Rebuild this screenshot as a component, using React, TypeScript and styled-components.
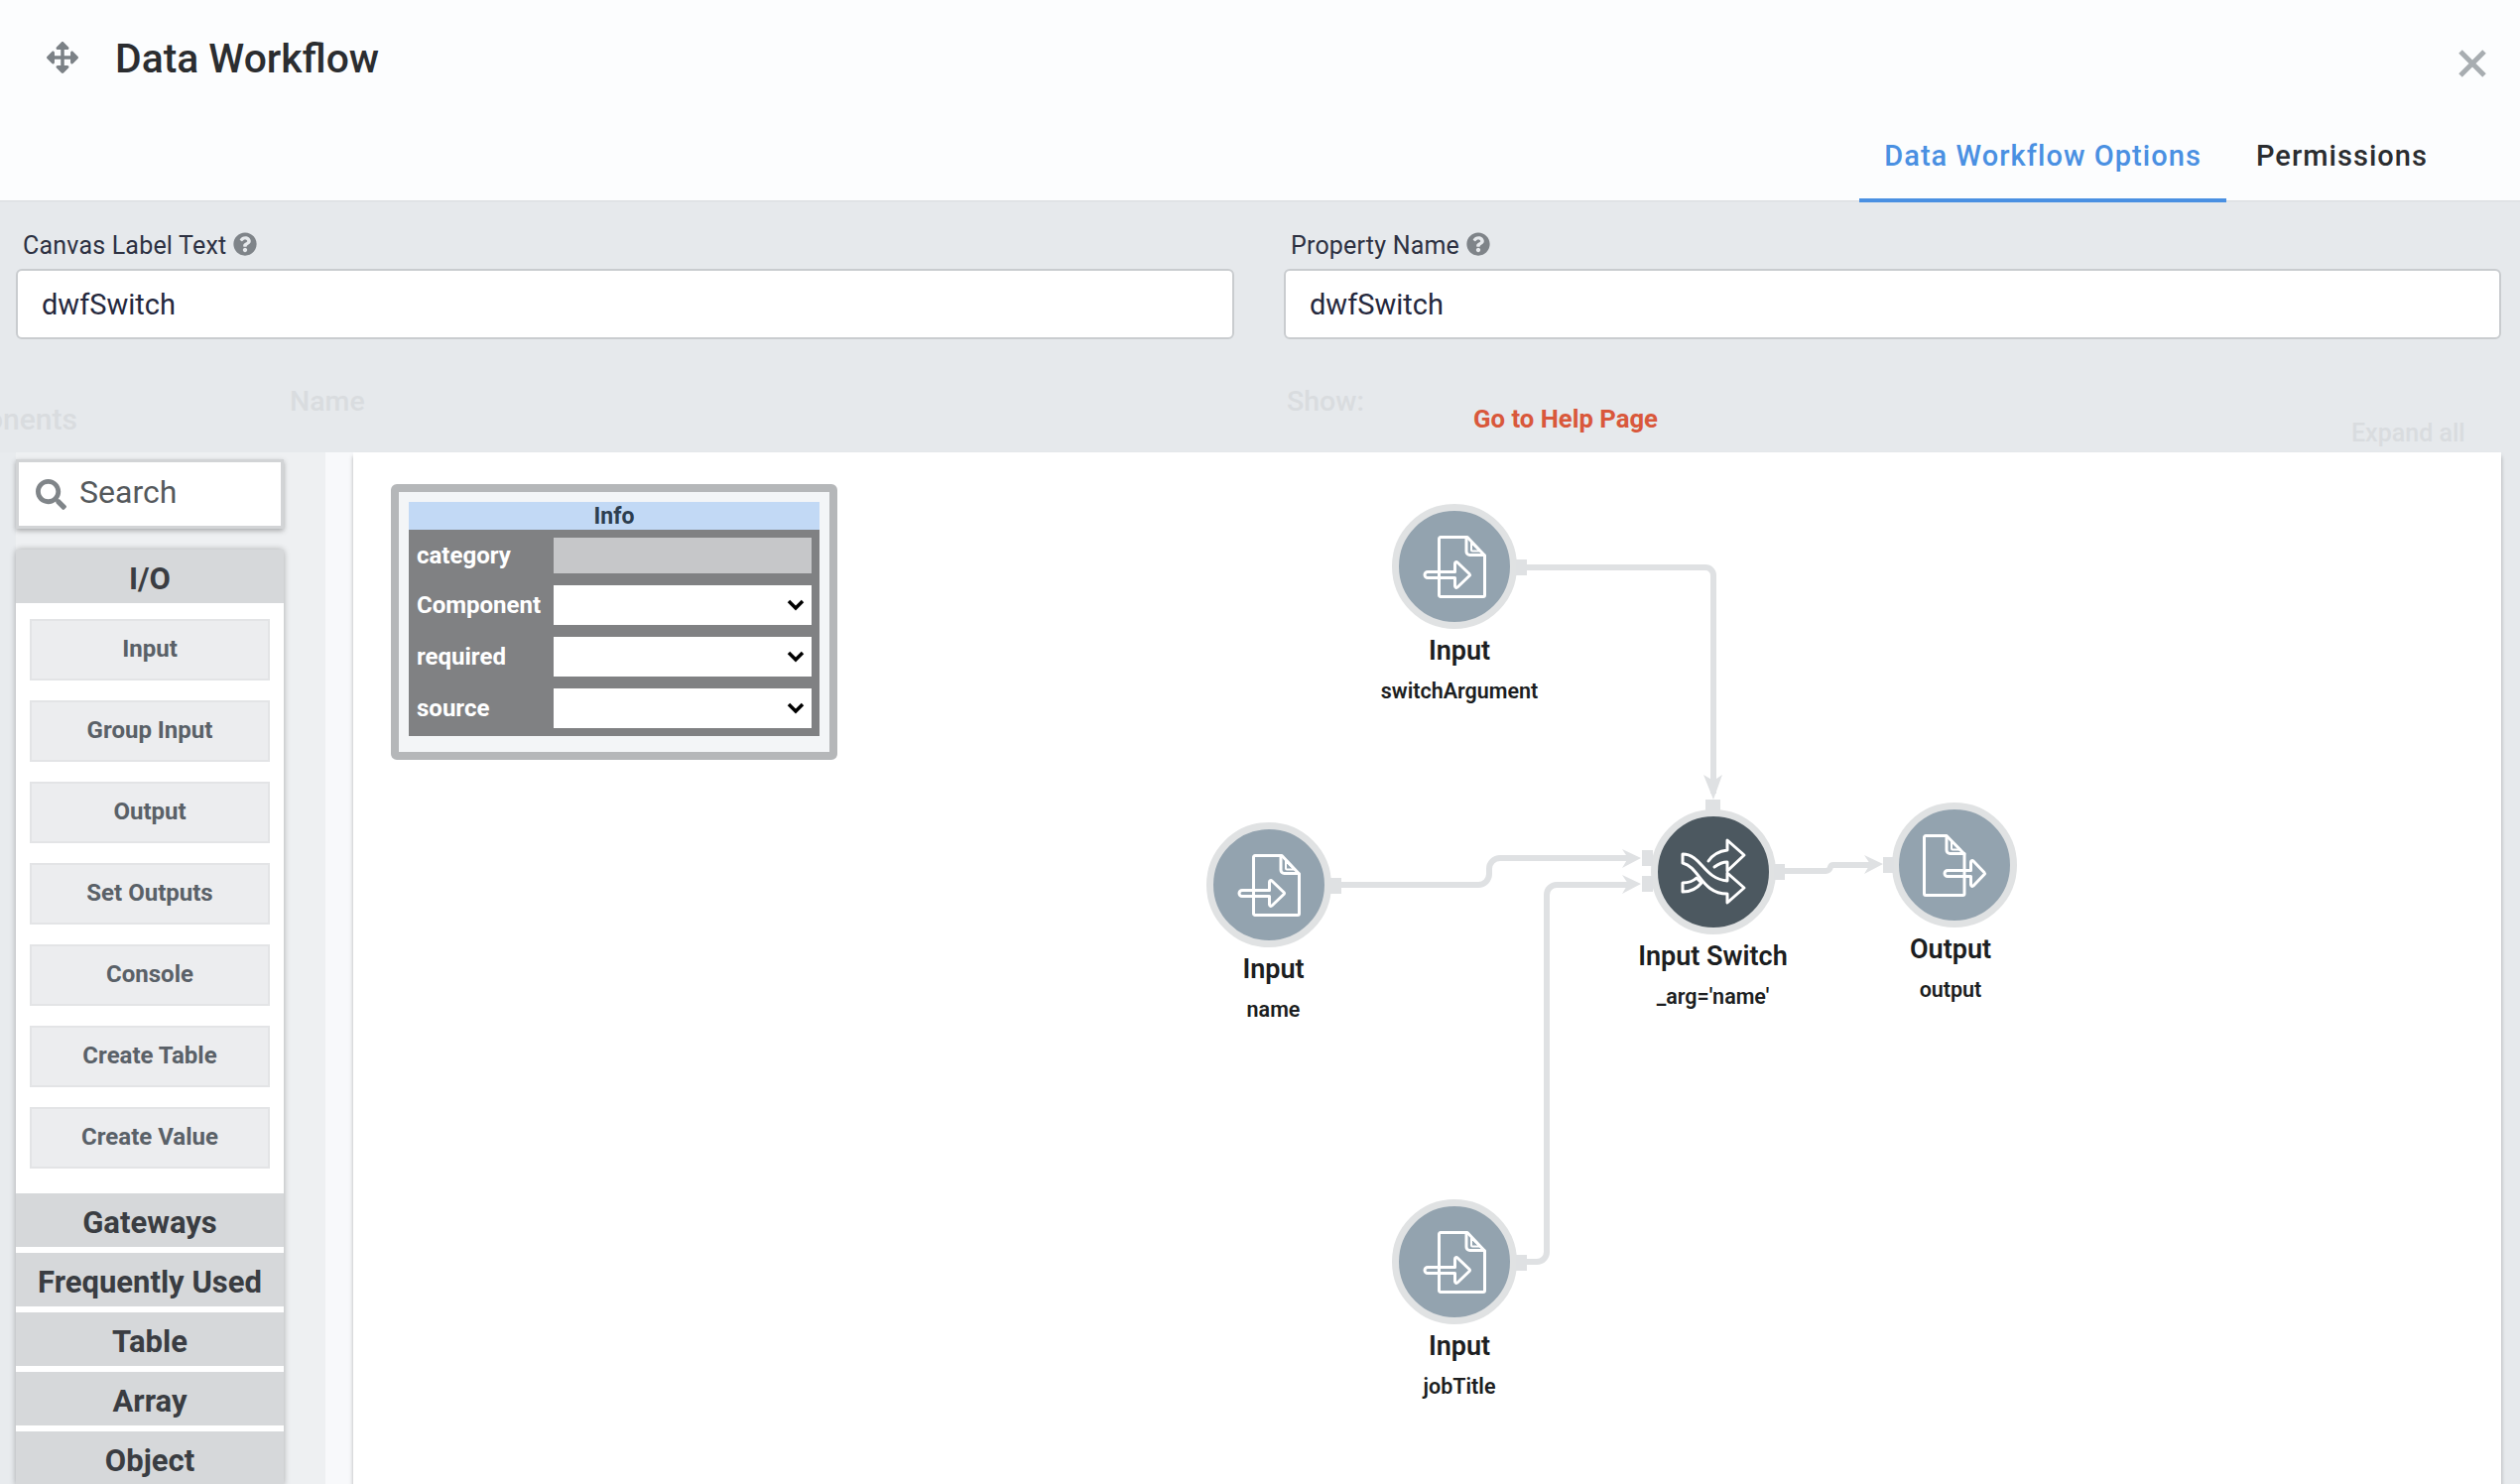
import styled, { createGlobalStyle } from 'styled-components';
import { FaArrowsAlt, FaQuestionCircle, FaSearch } from 'react-icons/fa';

const GlobalStyle = createGlobalStyle`
  html, body {
    margin: 0;
    padding: 0;
    background: #e6e9ec;
  }
  body {
    font-family: Roboto, "Liberation Sans", sans-serif;
  }
`;

const IO_ITEMS = ['Input', 'Group Input', 'Output', 'Set Outputs', 'Console', 'Create Table', 'Create Value'];
const SECTIONS = ['Gateways', 'Frequently Used', 'Table', 'Array', 'Object'];

function InputIcon() {
  return (
    <NodeIcon viewBox="-40 -40 80 80">
      <path d="M-14 -29.5H13L30.5 -11V29a1.5 1.5 0 0 1-1.5 1.5H-14a1.5 1.5 0 0 1-1.5-1.5V-28a1.5 1.5 0 0 1 1.5-1.5Z" />
      <path d="M12 -29V-15a3.5 3.5 0 0 0 3.5 3.5H30" />
      <path d="M17 -24L26 -15.5H18a1 1 0 0 1-1-1Z" strokeWidth="2" />
      <path d="M-3 5.5H0.5V-3a1.5 1.5 0 0 1 2.5-1L15 7.5a1.5 1.5 0 0 1 0 2L3 21a1.5 1.5 0 0 1-2.5-1V11.5H-27a3 3 0 0 1 0-6H-3Z" />
    </NodeIcon>
  );
}

function OutputIcon() {
  return (
    <NodeIcon viewBox="-40 -40 80 80">
      <path d="M-29 -29.5H-8L10 -11V29a1.5 1.5 0 0 1-1.5 1.5H-29a1.5 1.5 0 0 1-1.5-1.5V-28a1.5 1.5 0 0 1 1.5-1.5Z" />
      <path d="M-8 -29V-15a3.5 3.5 0 0 0 3.5 3.5H10" />
      <path d="M-3 -24L6 -15.5H-2a1 1 0 0 1-1-1Z" strokeWidth="2" />
      <path d="M8 5.5H16.5V-3a1.5 1.5 0 0 1 2.5-1L30 7.5a1.5 1.5 0 0 1 0 2L19 21a1.5 1.5 0 0 1-2.5-1V11.5H-7a3 3 0 0 1 0-6H8Z" />
    </NodeIcon>
  );
}

function SwitchIcon() {
  return (
    <NodeIcon viewBox="-40 -40 80 80">
      <path d="M-31 -18C-12 -18 -10 7 14 9V1L31 16L14 31V22C-12 22 -14 -5 -31 -9Z" />
      <path d="M-31 11V20C-22 20 -16 16 -12 11L-17 6C-20 9 -25 11 -31 11Z" />
      <path d="M-5 -11C-1 -17 6 -21 14 -22V-32L31 -17L14 -1V-10C8 -10 5 -8 1 -5" />
    </NodeIcon>
  );
}

function CloseIcon() {
  return (
    <CloseGlyph viewBox="0 0 28 28">
      <path d="M2 2L26 26M26 2L2 26" />
    </CloseGlyph>
  );
}

function Chevron() {
  return (
    <ChevronGlyph viewBox="0 0 18 12">
      <path d="M2 2L9 9L16 2" />
    </ChevronGlyph>
  );
}

function Help() {
  return (
    <HelpIcon>
      <FaQuestionCircle />
    </HelpIcon>
  );
}

export default function App() {
  return (
    <Page>
      <GlobalStyle />
      <Header>
        <TitleRow>
          <MoveIcon>
            <FaArrowsAlt />
          </MoveIcon>
          <Title>Data Workflow</Title>
          <CloseIcon />
        </TitleRow>
        <Tabs>
          <Tab $active>Data Workflow Options</Tab>
          <Tab>Permissions</Tab>
        </Tabs>
      </Header>

      <Fields>
        <Field>
          <FieldLabel>
            Canvas Label Text <Help />
          </FieldLabel>
          <TextBox>dwfSwitch</TextBox>
        </Field>
        <Field>
          <FieldLabel>
            Property Name <Help />
          </FieldLabel>
          <TextBox>dwfSwitch</TextBox>
        </Field>
      </Fields>

      <Backdrop>
        <Ghost $top={64} $clip>
          onents
        </Ghost>
        <Ghost $top={46} $big>
          Name
        </Ghost>
        <Ghost $top={46} $big>
          Show:
        </Ghost>
        <HelpLink>Go to Help Page</HelpLink>
        <Ghost $top={78}>Expand all</Ghost>
      </Backdrop>

      <Workspace>
        <SideColumn>
          <SearchBox>
            <SearchIcon>
              <FaSearch />
            </SearchIcon>
            <SearchText>Search</SearchText>
          </SearchBox>
          <Palette>
            <SectionHead $first>I/O</SectionHead>
            <SectionBody>
              {IO_ITEMS.map((item) => (
                <PaletteButton key={item}>{item}</PaletteButton>
              ))}
            </SectionBody>
            {SECTIONS.map((s) => (
              <SectionHead key={s}>{s}</SectionHead>
            ))}
          </Palette>
        </SideColumn>

        <Gutter>
          <Canvas>
            <Edges viewBox="356 456 2165 1040">
              <path d="M1539 572H1719a8 8 0 0 1 8 8V800" />
              <path d="M1351 892H1490a11 11 0 0 0 11-11V876a11 11 0 0 1 11-11H1645" />
              <path d="M1539 1272H1549a10 10 0 0 0 10-10V902a10 10 0 0 1 10-10H1645" />
              <path d="M1799 878H1840a5 5 0 0 0 5-4a3 3 0 0 1 3-2H1890" />
              <EdgeHead d="M1717 781L1727 787L1736 781L1727 806Z" />
              <EdgeHead d="M1635 856L1654 865L1635 875L1641 865Z" />
              <EdgeHead d="M1635 882L1654 891L1635 901L1641 891Z" />
              <EdgeHead d="M1879 862L1898 871L1879 881L1885 871Z" />
            </Edges>

            <InfoNode>
              <InfoTable>
                <InfoTitle>Info</InfoTitle>
                <InfoRow>
                  <InfoLabel>category</InfoLabel>
                  <DisabledField />
                </InfoRow>
                {['Component', 'required', 'source'].map((name) => (
                  <InfoRow key={name}>
                    <InfoLabel>{name}</InfoLabel>
                    <SelectField>
                      <Chevron />
                    </SelectField>
                  </InfoRow>
                ))}
              </InfoTable>
            </InfoNode>

            <Node $x={1110} $y={115}>
              <Circle>
                <Port $right={-10} $top={-7 + 63} />
                <InputIcon />
              </Circle>
              <NodeName $shift={5}>Input</NodeName>
              <NodeSub $shift={5}>switchArgument</NodeSub>
            </Node>

            <Node $x={922.5} $y={435.5}>
              <Circle>
                <Port $right={-10} $top={-7 + 63} />
                <InputIcon />
              </Circle>
              <NodeName $shift={5}>Input</NodeName>
              <NodeSub $shift={5}>name</NodeSub>
            </Node>

            <Node $x={1110} $y={815.5}>
              <Circle>
                <Port $right={-10} $top={-7 + 63} />
                <InputIcon />
              </Circle>
              <NodeName $shift={5}>Input</NodeName>
              <NodeSub $shift={5}>jobTitle</NodeSub>
            </Node>

            <Node $x={1370.5} $y={422.5}>
              <Circle $dark>
                <Port $right={-9} $top={55} />
                <Port $left={55} $top={-10} $wide />
                <Port $left={-9} $top={41} />
                <Port $left={-9} $top={67} />
                <SwitchIcon />
              </Circle>
              <NodeName>Input Switch</NodeName>
              <NodeSub>_arg='name'</NodeSub>
            </Node>

            <Node $x={1614} $y={415.5}>
              <Circle>
                <Port $left={-9} $top={55} />
                <OutputIcon />
              </Circle>
              <NodeName $shift={-4}>Output</NodeName>
              <NodeSub $shift={-4}>output</NodeSub>
            </Node>
          </Canvas>
        </Gutter>
      </Workspace>
    </Page>
  );
}

const Page = styled.div`
  width: 2540px;
  height: 1496px;
  overflow: hidden;
  display: flex;
  flex-direction: column;
  background: #e6e9ec;
`;

const Header = styled.header`
  height: 202px;
  flex: none;
  box-sizing: border-box;
  background: #fcfdfe;
  display: flex;
  flex-direction: column;
  justify-content: space-between;
  box-shadow: 0 1px 1px rgba(0, 0, 0, 0.05);
`;

const TitleRow = styled.div`
  display: flex;
  align-items: center;
  padding: 33px 34px 0 47px;
`;

const MoveIcon = styled.span`
  display: flex;
  font-size: 32px;
  color: #7b8186;
`;

const Title = styled.h1`
  flex: 1;
  margin: 2px 0 0 37px;
  font-size: 40.8px;
  line-height: 48px;
  font-weight: 500;
  color: #2b2d30;
`;

const CloseGlyph = styled.svg`
  width: 28px;
  height: 28px;
  margin-top: 11px;
  fill: none;
  stroke: #a8adb1;
  stroke-width: 5;
`;

const Tabs = styled.nav`
  display: flex;
  justify-content: flex-end;
  padding-right: 68px;
`;

const Tab = styled.div<{ $active?: boolean }>`
  height: 67px;
  box-sizing: border-box;
  padding: 0 25px;
  margin-bottom: -2px;
  font-size: 29px;
  line-height: 40px;
  font-weight: 500;
  letter-spacing: 1.05px;
  color: ${({ $active }) => ($active ? '#4a90e2' : '#2b2d30')};
  border-bottom: 4px solid ${({ $active }) => ($active ? '#4a90e2' : 'transparent')};
  margin-left: ${({ $active }) => ($active ? '0' : '5px')};
`;

const Fields = styled.section`
  display: grid;
  grid-template-columns: 1228px 1227px;
  column-gap: 50px;
  padding: 32px 0 0 16px;
  height: 139px;
  flex: none;
  box-sizing: border-box;
`;

const Field = styled.div`
  display: flex;
  flex-direction: column;
`;

const FieldLabel = styled.label`
  display: flex;
  align-items: center;
  gap: 7px;
  height: 26px;
  padding-left: 7px;
  margin-bottom: 11px;
  font-size: 25px;
  letter-spacing: 0.2px;
  color: #2d3142;
`;

const HelpIcon = styled.span`
  display: flex;
  margin-top: -3px;
  font-size: 24px;
  color: #7f8489;
`;

const TextBox = styled.div`
  height: 71px;
  box-sizing: border-box;
  display: flex;
  align-items: center;
  padding-left: 24px;
  background: #fff;
  border: 2px solid #c9cccf;
  border-radius: 6px;
  font-size: 29px;
  color: #25283d;
`;

const Backdrop = styled.div`
  height: 115px;
  flex: none;
  display: grid;
  grid-template-columns: 292px 1005px 188px 885px 1fr;
`;

const Ghost = styled.span<{ $top: number; $big?: boolean; $clip?: boolean }>`
  padding-top: ${({ $top }) => $top}px;
  font-size: ${({ $big, $clip }) => ($big ? 28.5 : $clip ? 30 : 25)}px;
  font-weight: ${({ $big }) => ($big ? 500 : 500)};
  line-height: 36px;
  color: #d9dcdf;
  ${({ $clip }) => ($clip ? 'margin-left: -14px; white-space: nowrap;' : '')}
`;

const HelpLink = styled.a`
  padding-top: 65px;
  font-size: 25.7px;
  line-height: 32px;
  font-weight: 700;
  color: #d9583b;
`;

const Workspace = styled.main`
  flex: 1;
  display: flex;
  min-height: 0;
`;

const SideColumn = styled.aside`
  width: 328px;
  flex: none;
  box-sizing: border-box;
  padding: 7px 42px 0 16px;
  background: linear-gradient(90deg, #e8ebee 16px, #eef0f2 16px);
`;

const SearchBox = styled.div`
  height: 70px;
  box-sizing: border-box;
  display: flex;
  align-items: center;
  gap: 14px;
  padding-left: 17px;
  background: #fff;
  border: 3px solid #d2d4d6;
  box-shadow: 0 2px 5px rgba(0, 0, 0, 0.3);
`;

const SearchIcon = styled.span`
  display: flex;
  font-size: 31px;
  color: #808589;
`;

const SearchText = styled.span`
  margin: -5px 0 0 -1px;
  font-size: 32px;
  color: #55595c;
`;

const Palette = styled.div`
  margin-top: 21px;
  background: #fff;
  box-shadow: 0 0 6px rgba(0, 0, 0, 0.3);
  border-radius: 4px 4px 0 0;
`;

const SectionHead = styled.div<{ $first?: boolean }>`
  height: 54px;
  box-sizing: border-box;
  padding-top: 5px;
  margin-bottom: ${({ $first }) => ($first ? 0 : 6)}px;
  display: flex;
  align-items: center;
  justify-content: center;
  background: #d6d8da;
  font-size: 31px;
  font-weight: 700;
  color: #3a3d42;
`;

const SectionBody = styled.div`
  display: flex;
  flex-direction: column;
  gap: 20px;
  padding: 16px 14px 25px;
`;

const PaletteButton = styled.div`
  height: 62px;
  box-sizing: border-box;
  display: flex;
  align-items: center;
  justify-content: center;
  padding-bottom: 2px;
  background: #ecedef;
  border: 2px solid #e3e4e6;
  font-size: 24px;
  font-weight: 700;
  color: #5a6168;
`;

const Gutter = styled.div`
  flex: 1;
  display: flex;
  padding: 0 19px 0 28px;
  background: linear-gradient(90deg, #f8f9fb 2184px, #e6e9ec 2184px);
`;

const Canvas = styled.div`
  position: relative;
  flex: 1;
  background: #fff;
  box-shadow: 0 4px 4px rgba(0, 0, 0, 0.3);
`;

const Edges = styled.svg`
  position: absolute;
  inset: 0;
  width: 2165px;
  height: 1040px;
  fill: none;
  stroke: #dfe1e3;
  stroke-width: 6;
`;

const EdgeHead = styled.path`
  fill: #dfe1e3;
  stroke: none;
`;

const InfoNode = styled.div`
  position: absolute;
  left: 38px;
  top: 32px;
  width: 450px;
  height: 278px;
  box-sizing: border-box;
  padding: 10px 10px 16px;
  background: #f3f5f7;
  border: 8px solid #b5b7b9;
  border-radius: 6px;
`;

const InfoTable = styled.div`
  background: #808183;
  height: 100%;
  display: flex;
  flex-direction: column;
`;

const InfoTitle = styled.div`
  height: 28px;
  line-height: 30px;
  text-align: center;
  background: #c2d9f5;
  font-size: 23px;
  font-weight: 700;
  color: #2d3e50;
  margin-bottom: 8px;
`;

const InfoRow = styled.div`
  display: grid;
  grid-template-columns: 146px 260px;
  align-items: center;
  margin-bottom: 12px;
`;

const InfoLabel = styled.span`
  padding-left: 8px;
  font-size: 24px;
  font-weight: 700;
  color: #fff;
  white-space: nowrap;
`;

const DisabledField = styled.div`
  height: 36px;
  background: #c6c7c9;
`;

const SelectField = styled.div`
  height: 40px;
  display: flex;
  align-items: center;
  justify-content: flex-end;
  padding-right: 7px;
  background: #fff;
`;

const ChevronGlyph = styled.svg`
  width: 18px;
  height: 12px;
  fill: none;
  stroke: #000;
  stroke-width: 3.5;
`;

const Node = styled.div<{ $x: number; $y: number }>`
  position: absolute;
  left: ${({ $x }) => $x - 120}px;
  top: ${({ $y }) => $y - 63}px;
  width: 240px;
  display: flex;
  flex-direction: column;
  align-items: center;
`;

const Circle = styled.div<{ $dark?: boolean }>`
  position: relative;
  width: 126px;
  height: 126px;
  box-sizing: border-box;
  display: flex;
  align-items: center;
  justify-content: center;
  border-radius: 50%;
  border: 7px solid #e0e2e3;
  background: ${({ $dark }) => ($dark ? '#4c5860' : '#93a3af')};
`;

const Port = styled.span<{ $left?: number; $right?: number; $top: number; $wide?: boolean }>`
  position: absolute;
  ${({ $left }) => ($left !== undefined ? `left: ${$left - 7}px;` : '')}
  ${({ $right }) => ($right !== undefined ? `right: ${$right - 7}px;` : '')}
  top: ${({ $top }) => $top - 7}px;
  width: ${({ $wide }) => ($wide ? 15 : 11)}px;
  height: ${({ $wide }) => ($wide ? 11 : 16)}px;
  background: #dfe1e3;
`;

const NodeIcon = styled.svg`
  width: 80px;
  height: 80px;
  fill: none;
  stroke: #fff;
  stroke-width: 3;
  stroke-linejoin: round;
  stroke-linecap: round;
`;

const NodeName = styled.div<{ $shift?: number }>`
  margin-top: 4px;
  font-size: 27px;
  line-height: 36px;
  font-weight: 600;
  color: #1c1e21;
  white-space: nowrap;
  transform: translateX(${({ $shift }) => $shift ?? 0}px);
`;

const NodeSub = styled.div<{ $shift?: number }>`
  margin-top: 9px;
  font-size: 21.5px;
  line-height: 28px;
  font-weight: 600;
  color: #1c1e21;
  white-space: nowrap;
  transform: translateX(${({ $shift }) => $shift ?? 0}px);
`;
